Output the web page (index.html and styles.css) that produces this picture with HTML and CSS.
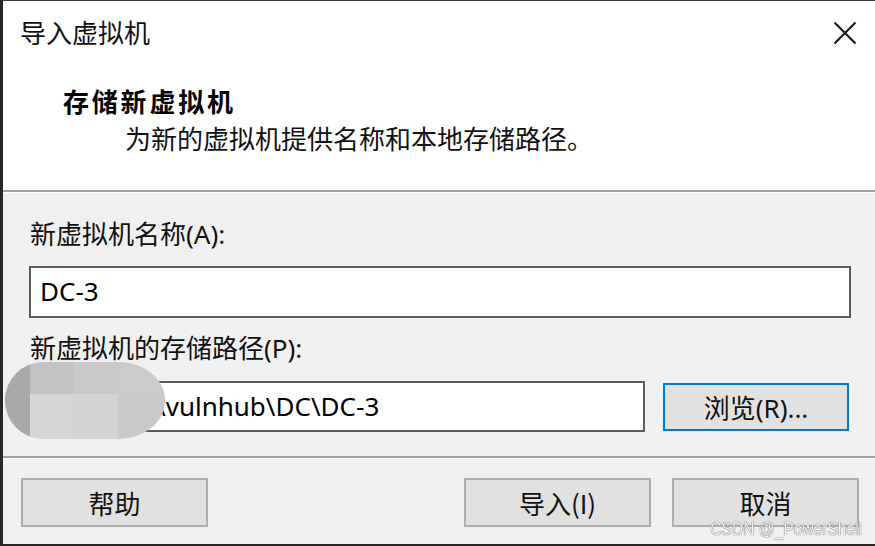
FILE: index.html
```html
<!DOCTYPE html>
<html lang="zh-CN">
<head>
<meta charset="utf-8">
<title>导入虚拟机</title>
<link rel="stylesheet" href="styles.css">
</head>
<body>
<div class="window">
  <div class="header">
    <div class="titlebar">
      <div class="title">导入虚拟机</div>
      <svg class="close" width="24" height="24" viewBox="0 0 24 24" aria-hidden="true">
        <path d="M1.5 1.5 L22.5 22.5 M22.5 1.5 L1.5 22.5" stroke="#1a1a1a" stroke-width="2.2" fill="none"/>
      </svg>
    </div>
    <div class="heading">存储新虚拟机</div>
    <div class="subheading">为新的虚拟机提供名称和本地存储路径。</div>
  </div>
  <div class="sep"></div>
  <div class="body">
    <div class="label label-first">新虚拟机名称(A):</div>
    <div class="input input-name">DC-3</div>
    <div class="label label-second">新虚拟机的存储路径(P):</div>
    <div class="path-row">
      <div class="input input-path">\vulnhub\DC\DC-3</div>
      <div class="btn btn-browse">浏览(R)...</div>
      <div class="blob">
        <div class="blob-edge"></div>
        <div class="blob-cell c1"></div>
        <div class="blob-cell c2"></div>
        <div class="blob-cell c3"></div>
        <div class="blob-cell c4"></div>
        <div class="blob-cell c5"></div>
        <div class="blob-cell c6"></div>
      </div>
    </div>
  </div>
  <div class="sep"></div>
  <div class="footer">
    <div class="btn btn-foot">帮助</div>
    <div class="spacer"></div>
    <div class="btn btn-foot">导入(I)</div>
    <div class="btn btn-foot">取消</div>
    <div class="watermark">CSDN @_PowerShell</div>
  </div>
</div>
</body>
</html>
```
FILE: styles.css
```css
* { box-sizing: border-box; }
html, body { margin: 0; padding: 0; }
body {
  width: 875px;
  height: 546px;
  overflow: hidden;
  background: #2a2a2a;
  font-family: "Noto Sans", "Noto Sans CJK SC", sans-serif;
  color: #000;
}
.window {
  width: 875px;
  height: 546px;
  display: flex;
  flex-direction: column;
  border-left: 3px solid #262626;
  border-top: 1px solid #3a3a3a;
  border-bottom: 2px solid #262626;
  background: #f0f0f0;
}
.header {
  height: 189px;
  background: #fff;
  padding: 0;
  flex: none;
}
.titlebar {
  display: flex;
  align-items: flex-start;
  justify-content: space-between;
  padding: 18px 18px 0 17px;
  height: 46px;
}
.title {
  font-family: "Noto Sans CJK SC", sans-serif;
  font-size: 26px;
  line-height: 26px;
  color: #111;
}
.close { margin-top: 2px; }
.heading {
  font-family: "Noto Sans CJK SC", sans-serif;
  font-weight: 700;
  font-size: 26px;
  line-height: 26px;
  letter-spacing: 2.8px;
  margin: 41px 0 0 60px;
}
.subheading {
  font-family: "Noto Sans CJK SC", sans-serif;
  font-size: 26px;
  line-height: 26px;
  margin: 11px 0 0 122px;
  color: #111;
}
.sep {
  height: 3px;
  flex: none;
  background: #a0a0a0;
  border-bottom: 1px solid #fff;
}
.body {
  height: 263px;
  flex: none;
  padding: 28px 24px 0 26px;
  display: flex;
  flex-direction: column;
}
.label {
  font-size: 26px;
  line-height: 26px;
  color: #111;
  padding-left: 1px;
}
.input {
  height: 52px;
  background: #fff;
  border: 2px solid #5c5c5c;
  font-size: 26px;
  line-height: 46px;
  padding-left: 9px;
  color: #000;
}
.input-name { margin-top: 19px; }
.label-second { margin-top: 17px; }
.path-row {
  position: relative;
  display: flex;
  align-items: center;
  margin-top: 20px;
  gap: 18px;
}
.input-path {
  width: 616px;
  height: 51px;
  padding-left: 125px;
}
.btn {
  display: flex;
  align-items: center;
  justify-content: center;
  background: #e1e1e1;
  border: 2px solid #adadad;
  font-size: 26px;
  color: #111;
}
.btn-browse {
  width: 186px;
  height: 48px;
  border-color: #0078d7;
}
.blob {
  position: absolute;
  left: -24px;
  top: -19px;
  width: 160px;
  height: 77px;
  border-radius: 38px 46px 46px 38px / 38px;
  overflow: hidden;
  display: grid;
  grid-template-columns: 25px 43px 45px 47px;
  grid-template-rows: 32px 45px;
  filter: blur(0.6px);
}
.blob-edge { grid-row: 1 / 3; background: #a9a9a9; }
.c1 { background: #c2c2c2; }
.c2 { background: #c9c9c9; }
.c3 { background: #cbcbcb; }
.c4 { background: #d6d6d6; }
.c5 { background: #d3d3d3; }
.c6 { background: #c9c9c9; }
.footer {
  position: relative;
  flex: 1;
  display: flex;
  align-items: flex-start;
  padding: 19px 16px 0 18px;
  gap: 21px;
}
.spacer { flex: 1; }
.btn-foot {
  width: 187px;
  height: 49px;
  font-family: "Noto Sans CJK SC", sans-serif;
}
.watermark {
  position: absolute;
  right: 13px;
  top: 60px;
  font-family: "Liberation Sans", sans-serif;
  font-size: 19px;
  line-height: 19px;
  color: #f4f4f4;
  text-shadow: 0 0 1px #5a5a5a, 0 0 1px #5a5a5a;
  transform: scaleX(0.82);
  transform-origin: right top;
  white-space: nowrap;
}
```
